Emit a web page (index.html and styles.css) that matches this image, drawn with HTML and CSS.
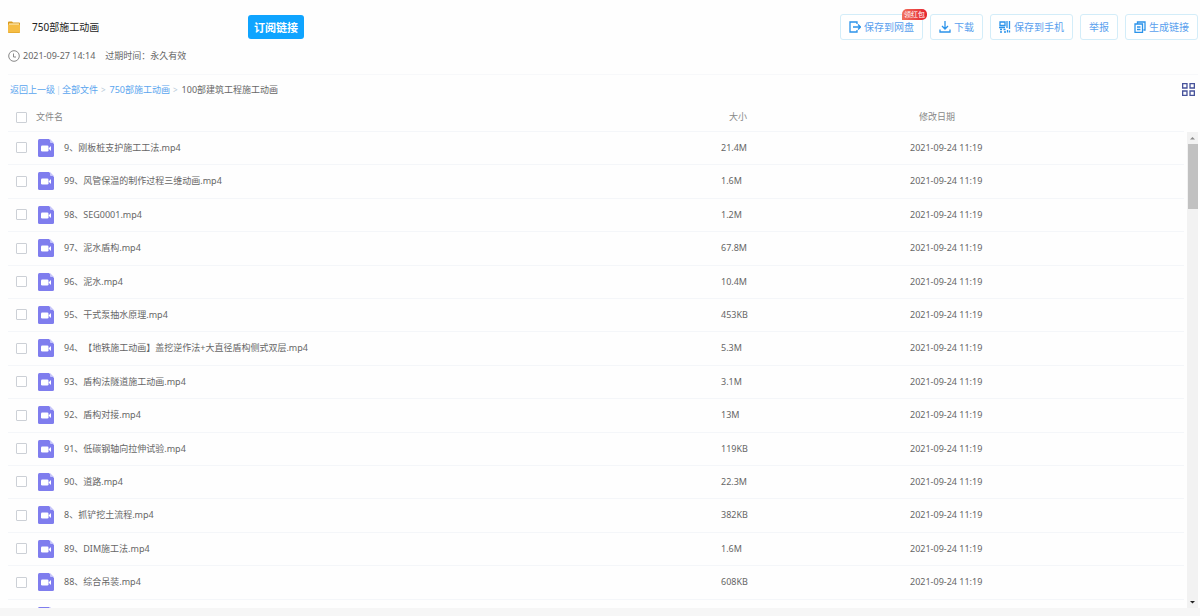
FILE: index.html
```
<!DOCTYPE html>
<html lang="zh-CN">
<head>
    <meta charset="UTF-8">
    <meta name="viewport" content="width=device-width, initial-scale=1.0">
    <title>750部施工动画</title>
    <link rel="stylesheet" href="styles.css">
</head>
<body>
    <div class="page">
        <header class="header">
            <div class="title-row">
                <svg class="folder" viewBox="0 0 12 12">
                    <path d="M0 1.5Q0 .5 1 .5H4L5 1.5H11Q12 1.5 12 2.5V11Q12 12 11 12H1Q0 12 0 11Z" fill="#d99a1c"/>
                    <path d="M1 2.5H11V5H1Z" fill="#fff3cf"/>
                    <path d="M0 3.5H12V10.5Q12 11.5 11 11.5H1Q0 11.5 0 10.5Z" fill="#f6bd45"/>
                </svg>
                <h1>750部施工动画</h1>
                <button class="subscribe" type="button">订阅链接</button>
                <div class="toolbar">
                    <button class="tool" type="button">
                        <svg viewBox="0 0 12 12"><path d="M8 3V1H1V11H8V9M4 6H11M9 3.5L11.5 6L9 8.5"/></svg>
                        保存到网盘
                        <span class="badge">领红包</span>
                    </button>
                    <button class="tool" type="button">
                        <svg viewBox="0 0 12 12"><path d="M6 0V8M3 5L6 8L9 5M1 8.500V11H11V8.500"/></svg>
                        下载
                    </button>
                    <button class="tool" type="button">
                        <svg viewBox="0 0 12 12"><path d="M1 1H6V4.500H1ZM8 0V7M10.500 0V8M0 6.500H6M1 8.500H3M1 11H3M4.500 8.500H6.500M5 11H7M8.500 9V11.500M10.500 9.500V11.500"/></svg>
                        保存到手机
                    </button>
                    <button class="tool" type="button">举报</button>
                    <button class="tool" type="button">
                        <svg viewBox="0 0 12 12"><path d="M3.500 2.500V1H11V9H9.500M1 3H8.500V11.500H1ZM3 6H6.500M3 8.500H6.500"/></svg>
                        生成链接
                    </button>
                </div>
            </div>
            <div class="meta">
                <svg class="clock" viewBox="0 0 12 12"><circle cx="6" cy="6" r="5.300"/><path d="M5.500 3.500V7H8"/></svg>
                <span>2021-09-27 14:14</span>
                <span class="expire">过期时间：永久有效</span>
            </div>
        </header>

        <nav class="crumbs">
            <a href="#">返回上一级</a>
            <span class="sep">|</span>
            <a href="#">全部文件</a>
            <span class="arrow">&gt;</span>
            <a href="#">750部施工动画</a>
            <span class="arrow">&gt;</span>
            <span>100部建筑工程施工动画</span>
            <button class="view" type="button" aria-label="缩略图">
                <svg viewBox="0 0 12 12"><path d="M.6 .6H4.600V4.600H.6ZM7.400 .6H11.400V4.600H7.400ZM.6 7.400H4.600V11.400H.6ZM7.400 7.400H11.400V11.400H7.400Z"/></svg>
            </button>
        </nav>

        <!-- shared video file icon -->
        <svg class="symbols">
            <symbol id="video" viewBox="0 0 16 18">
                <path d="M1.500 0H11L16 5V16.500Q16 18 14.500 18H1.500Q0 18 0 16.500V1.500Q0 0 1.500 0Z" fill="#7f7dee"/>
                <path d="M12 0L16 4H13Q12 4 12 3Z" fill="#c5c4fa"/>
                <rect x="3" y="6.500" width="7.500" height="6" rx="1.200" fill="#fff"/>
                <path d="M10.500 9.500L13 7V12Z" fill="#fff"/>
            </symbol>
        </svg>

        <main class="files">
            <div class="list">
                <table>
                    <thead>
                        <tr>
                            <th class="name"><div class="cell"><input type="checkbox" id="all"><label for="all">文件名</label></div></th>
                            <th class="size">大小</th>
                            <th class="date">修改日期</th>
                        </tr>
                    </thead>
                    <tbody>
                        <tr>
                            <td><div class="cell"><input type="checkbox" id="f1"><svg class="icon"><use href="#video"/></svg><label for="f1">9、刚板桩支护施工工法.mp4</label></div></td>
                            <td>21.4M</td>
                            <td>2021-09-24 11:19</td>
                        </tr>
                        <tr>
                            <td><div class="cell"><input type="checkbox" id="f2"><svg class="icon"><use href="#video"/></svg><label for="f2">99、风管保温的制作过程三维动画.mp4</label></div></td>
                            <td>1.6M</td>
                            <td>2021-09-24 11:19</td>
                        </tr>
                        <tr>
                            <td><div class="cell"><input type="checkbox" id="f3"><svg class="icon"><use href="#video"/></svg><label for="f3">98、SEG0001.mp4</label></div></td>
                            <td>1.2M</td>
                            <td>2021-09-24 11:19</td>
                        </tr>
                        <tr>
                            <td><div class="cell"><input type="checkbox" id="f4"><svg class="icon"><use href="#video"/></svg><label for="f4">97、泥水盾构.mp4</label></div></td>
                            <td>67.8M</td>
                            <td>2021-09-24 11:19</td>
                        </tr>
                        <tr>
                            <td><div class="cell"><input type="checkbox" id="f5"><svg class="icon"><use href="#video"/></svg><label for="f5">96、泥水.mp4</label></div></td>
                            <td>10.4M</td>
                            <td>2021-09-24 11:19</td>
                        </tr>
                        <tr>
                            <td><div class="cell"><input type="checkbox" id="f6"><svg class="icon"><use href="#video"/></svg><label for="f6">95、干式泵抽水原理.mp4</label></div></td>
                            <td>453KB</td>
                            <td>2021-09-24 11:19</td>
                        </tr>
                        <tr>
                            <td><div class="cell"><input type="checkbox" id="f7"><svg class="icon"><use href="#video"/></svg><label for="f7">94、【地铁施工动画】盖挖逆作法+大直径盾构侧式双层.mp4</label></div></td>
                            <td>5.3M</td>
                            <td>2021-09-24 11:19</td>
                        </tr>
                        <tr>
                            <td><div class="cell"><input type="checkbox" id="f8"><svg class="icon"><use href="#video"/></svg><label for="f8">93、盾构法隧道施工动画.mp4</label></div></td>
                            <td>3.1M</td>
                            <td>2021-09-24 11:19</td>
                        </tr>
                        <tr>
                            <td><div class="cell"><input type="checkbox" id="f9"><svg class="icon"><use href="#video"/></svg><label for="f9">92、盾构对接.mp4</label></div></td>
                            <td>13M</td>
                            <td>2021-09-24 11:19</td>
                        </tr>
                        <tr>
                            <td><div class="cell"><input type="checkbox" id="f10"><svg class="icon"><use href="#video"/></svg><label for="f10">91、低碳钢轴向拉伸试验.mp4</label></div></td>
                            <td>119KB</td>
                            <td>2021-09-24 11:19</td>
                        </tr>
                        <tr>
                            <td><div class="cell"><input type="checkbox" id="f11"><svg class="icon"><use href="#video"/></svg><label for="f11">90、道路.mp4</label></div></td>
                            <td>22.3M</td>
                            <td>2021-09-24 11:19</td>
                        </tr>
                        <tr>
                            <td><div class="cell"><input type="checkbox" id="f12"><svg class="icon"><use href="#video"/></svg><label for="f12">8、抓铲挖土流程.mp4</label></div></td>
                            <td>382KB</td>
                            <td>2021-09-24 11:19</td>
                        </tr>
                        <tr>
                            <td><div class="cell"><input type="checkbox" id="f13"><svg class="icon"><use href="#video"/></svg><label for="f13">89、DIM施工法.mp4</label></div></td>
                            <td>1.6M</td>
                            <td>2021-09-24 11:19</td>
                        </tr>
                        <tr>
                            <td><div class="cell"><input type="checkbox" id="f14"><svg class="icon"><use href="#video"/></svg><label for="f14">88、综合吊装.mp4</label></div></td>
                            <td>608KB</td>
                            <td>2021-09-24 11:19</td>
                        </tr>
                        <tr>
                            <td><div class="cell"><input type="checkbox" id="f15"><svg class="icon"><use href="#video"/></svg></div></td>
                            <td></td>
                            <td></td>
                        </tr>
                    </tbody>
                </table>
            </div>
            <div class="scrollbar">
                <svg viewBox="0 0 11 12"><path d="M3 7.500L5.500 5L8 7.500Z" fill="#8a8a8a"/></svg>
                <div class="track"><div class="thumb"></div></div>
                <svg viewBox="0 0 11 12"><path d="M3 5L8 5L5.500 7.500Z" fill="#222"/></svg>
            </div>
        </main>
    </div>
</body>
</html>
```

FILE: styles.css
```
* {
    box-sizing: border-box;
}

body {
    margin: 0;
    background-color: #f6f6f6;
    font-family: "Noto Sans", "Noto Sans CJK SC", sans-serif;
    font-size: 9px;
    line-height: 14px;
    text-spacing-trim: space-all;
    color: #666;
}

button {
    font-family: inherit;
    cursor: pointer;
}

a {
    color: #5aa5ee;
    text-decoration: none;
}

.page {
    display: flex;
    flex-direction: column;
    height: calc(100vh - 8px);
    padding: 0 2px 0 8px;
    background-color: #fefefe;
}

.header {
    padding-top: 13px;
    padding-bottom: 11px;
    border-bottom: 1px solid #f7f8fa;
}

.title-row {
    display: flex;
    align-items: center;
    height: 27px;
}

.folder {
    width: 12px;
    height: 12px;
    margin-right: 12px;
}

h1 {
    width: 216px;
    margin: 0;
    font-size: 10px;
    font-weight: 400;
    color: #222;
}

.subscribe {
    height: 24px;
    padding: 0 6px;
    border: none;
    border-radius: 3px;
    background-color: #0fa4ff;
    color: #fff;
    font-size: 11px;
    font-weight: 700;
}

.toolbar {
    display: flex;
    gap: 7px;
    margin-left: auto;
}

.tool {
    position: relative;
    display: flex;
    align-items: center;
    gap: 3px;
    height: 26px;
    padding: 0 8px;
    border: 1px solid #d3edf9;
    border-radius: 3px;
    background-color: #fff;
    color: #5a9fee;
    font-size: 10px;
}

.tool svg {
    width: 12px;
    height: 12px;
    fill: none;
    stroke: #2b93ea;
    stroke-width: 1.3;
}

.badge {
    position: absolute;
    top: -6px;
    right: -5px;
    padding: 0 2px;
    border-radius: 5px 5px 5px 0;
    background: linear-gradient(90deg, #f0705c, #e5232f);
    color: #fff;
    font-size: 7px;
    line-height: 11px;
}

.meta {
    display: flex;
    align-items: center;
    margin-top: 9px;
}

.clock {
    width: 12px;
    height: 12px;
    margin-right: 3px;
    fill: none;
    stroke: #888;
}

.expire {
    margin-left: 10px;
}

.crumbs {
    display: flex;
    align-items: center;
    height: 29px;
    padding: 0 3px 0 2px;
}

.sep {
    margin: 0 1px;
    color: #bcd6f0;
}

.arrow {
    margin: 0 4px 0 3px;
    color: #b8c8d8;
    font-size: 8px;
}

.view {
    margin-left: auto;
    padding: 0;
    border: none;
    background: none;
}

.view svg {
    display: block;
    width: 13px;
    height: 13px;
    fill: none;
    stroke: #46529a;
    stroke-width: 1.2;
}

.symbols {
    display: none;
}

.files {
    display: flex;
    flex: 1;
    gap: 3px;
    min-height: 0;
}

.list {
    flex: 1;
    overflow: hidden;
}

table {
    width: 100%;
    border-collapse: collapse;
    table-layout: fixed;
}

th,
td {
    padding: 0;
    border-bottom: 1px solid #f4f6f9;
    text-align: left;
    font-weight: 400;
}

th {
    height: 27px;
    color: #888;
}

td {
    height: 33px;
}

/* two rows in five are a pixel taller */
tr:nth-child(5n+2) td,
tr:nth-child(5n+4) td {
    height: 34px;
}

.size {
    width: 189px;
    padding-left: 8px;
}

.date {
    width: 274px;
    padding-left: 9px;
}

.cell {
    display: flex;
    align-items: center;
    padding-left: 8px;
}

input {
    appearance: none;
    width: 11px;
    height: 11px;
    margin: 0 9px 0 0;
    border: 1px solid #ccd0d6;
    border-radius: 1px;
    background-color: #fff;
}

.icon {
    width: 16px;
    height: 18px;
    margin-left: 2px;
    margin-right: 10px;
}

.scrollbar {
    display: flex;
    flex-direction: column;
    width: 11px;
    margin-top: 28px;
    background-color: #f2f2f2;
}

.scrollbar svg {
    height: 12px;
}

.track {
    flex: 1;
    padding-left: 1px;
}

.thumb {
    height: 65px;
    background-color: #c1c1c1;
}
```
